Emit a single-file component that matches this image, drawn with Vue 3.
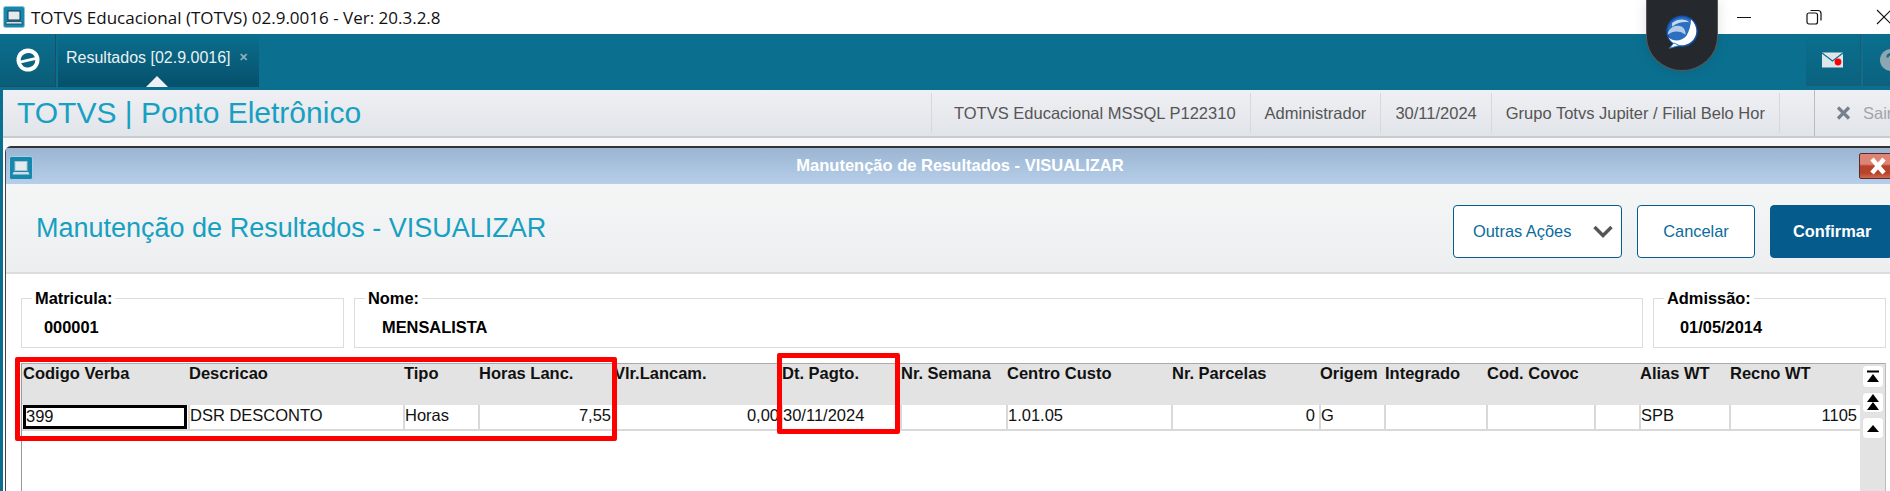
<script setup>
const info = [
  'TOTVS Educacional MSSQL P122310',
  'Administrador',
  '30/11/2024',
  'Grupo Totvs Jupiter / Filial Belo Hor'
]
const fields = [
  { key: 'mat', label: 'Matricula:', value: '000001' },
  { key: 'nome', label: 'Nome:', value: 'MENSALISTA' },
  { key: 'adm', label: 'Admissão:', value: '01/05/2014' }
]
const cols = [
  { h: 'Codigo Verba', v: '399', cls: 'focus' },
  { h: 'Descricao', v: 'DSR DESCONTO' },
  { h: 'Tipo', v: 'Horas' },
  { h: 'Horas Lanc.', v: '7,55', cls: 'num' },
  { h: 'Vlr.Lancam.', v: '0,00', cls: 'num' },
  { h: 'Dt. Pagto.', v: '30/11/2024' },
  { h: 'Nr. Semana', v: '' },
  { h: 'Centro Custo', v: '1.01.05' },
  { h: 'Nr. Parcelas', v: '0', cls: 'num wide' },
  { h: 'Origem', v: 'G' },
  { h: 'Integrado', v: '' },
  { h: 'Cod. Covoc', v: '' },
  { h: '', v: '' },
  { h: 'Alias WT', v: 'SPB' },
  { h: 'Recno WT', v: '1105', cls: 'num' }
]
</script>

<template>
  <div class="app">
    <header class="titlebar">
      <svg class="appicon" width="22" height="22" viewBox="0 0 22 22">
        <rect x="0.5" y="0.5" width="21" height="21" rx="2" fill="#1788ad" stroke="#8fc3d6" />
        <rect x="5" y="5" width="12" height="9" fill="#e4ebef" stroke="#16394c" />
        <path d="M3.5 15.5h15l1 2.5h-17z" fill="#cfdde4" stroke="#16394c" stroke-width="0.7" />
      </svg>
      <span class="apptitle">TOTVS Educacional (TOTVS) 02.9.0016 - Ver: 20.3.2.8</span>
      <div class="winctrls">
        <svg width="16" height="16" viewBox="0 0 16 16"><path d="M1 8.5h14" stroke="#111" stroke-width="1" /></svg>
        <svg width="16" height="16" viewBox="0 0 16 16" fill="none" stroke="#111" stroke-width="1.2">
          <rect x="1" y="4" width="10.5" height="11" rx="2" />
          <path d="M4.5 1.5h7.5a3 3 0 0 1 3 3v7" />
        </svg>
        <svg width="16" height="16" viewBox="0 0 16 16"><path d="M1 1l14 14M15 1L1 15" stroke="#111" stroke-width="1.1" /></svg>
      </div>
    </header>

    <nav class="topbar">
      <div class="hometile">
        <svg width="24" height="24" viewBox="0 0 24 24">
          <circle cx="12" cy="12" r="11.500" fill="#fff" />
          <path d="M4.700 12.400A7.500 7.500 0 0 1 18.900 9.200Z" fill="#0a6583" />
          <path d="M5.100 15.200L19.300 12A7.500 7.500 0 0 1 5.100 15.200Z" fill="#0a6583" />
        </svg>
      </div>
      <div class="tab">
        <span class="tabtext">Resultados [02.9.0016]</span>
        <span class="tabx">✕</span>
        <i class="tabarrow"></i>
      </div>
      <div class="spacer"></div>
      <div class="sidetile mail">
        <svg width="22" height="16" viewBox="0 0 22 16">
          <rect width="21" height="15" y="0.5" fill="#dfe6e9" />
          <path d="M0 1l10.5 8L21 1" fill="none" stroke="#0b6f8e" stroke-width="1.2" />
          <circle cx="16" cy="10" r="3.4" fill="#f00" />
        </svg>
      </div>
      <div class="sidetile help">
        <svg width="26" height="26" viewBox="0 0 26 26">
          <circle cx="13" cy="13" r="11" fill="#8da7b2" />
          <path d="M9.500 10.500a3.500 3.500 0 1 1 5 3.200c-1 .5-1.500 1-1.500 2.300" fill="none" stroke="#0b6f8e" stroke-width="2.400" />
        </svg>
      </div>
    </nav>

    <div class="main">
      <div class="rail"></div>
      <div class="content">
        <div class="apphead">
          <h1 class="brand">TOTVS | Ponto Eletrônico</h1>
          <div class="infos">
            <span v-for="t in info" :key="t" class="info">{{ t }}</span>
          </div>
          <div class="sair">
            <svg width="15" height="14" viewBox="0 0 15 14"><path d="M2 1.500l11 11M13 1.500l-11 11" stroke="#77808c" stroke-width="3.200" /></svg>
            <span>Sair</span>
          </div>
        </div>

        <section class="window">
          <div class="wintitle">
            <svg class="winicon" width="24" height="24" viewBox="0 0 24 24">
              <rect x="0.5" y="0.5" width="23" height="23" rx="2" fill="#1788ad" stroke="#a8d0e2" />
              <rect x="6" y="5.500" width="12" height="9" fill="#e4ebef" stroke="#a9c3cf" />
              <path d="M4.500 16h15l1 2.500h-17z" fill="#cfdde4" />
            </svg>
            <span>Manutenção de Resultados - VISUALIZAR</span>
            <div class="winclose">
              <svg width="30" height="20" viewBox="0 0 30 20"><path d="M4 3l12 14M16 3L4 17" stroke="#fff" stroke-width="4.400" /></svg>
            </div>
          </div>

          <div class="winhead">
            <h2 class="wintext">Manutenção de Resultados - VISUALIZAR</h2>
            <div class="actions">
              <button class="btn outras">
                <span>Outras Ações</span>
                <svg width="20" height="13" viewBox="0 0 20 13"><path d="M1.500 2l8.500 8.500L18.500 2" fill="none" stroke="#555" stroke-width="3.400" /></svg>
              </button>
              <button class="btn cancelar">Cancelar</button>
              <button class="btn confirmar">Confirmar</button>
            </div>
          </div>

          <div class="fields">
            <fieldset v-for="f in fields" :key="f.key" class="field" :class="f.key">
              <legend>{{ f.label }}</legend>
              <div class="value">{{ f.value }}</div>
            </fieldset>
          </div>

          <div class="gridwrap">
            <div class="grid">
              <div class="ghead">
                <div v-for="c in cols" :key="c.h" class="hcell">{{ c.h }}</div>
              </div>
              <div class="grow">
                <div v-for="c in cols" :key="c.h" class="cell" :class="c.cls">{{ c.v }}</div>
              </div>
            </div>
            <aside class="scroll">
              <button class="sbtn">
                <svg width="14" height="13" viewBox="0 0 14 13"><path d="M1 1.500h12" stroke="#000" stroke-width="2" /><path d="M7 4l6 8H1z" /></svg>
              </button>
              <button class="sbtn">
                <svg width="14" height="17" viewBox="0 0 14 17"><path d="M7 0l6 8H1zM7 8l6 8H1z" /></svg>
              </button>
              <button class="sbtn">
                <svg width="14" height="9" viewBox="0 0 14 9"><path d="M7 1l6 7H1z" /></svg>
              </button>
            </aside>
          </div>
        </section>
      </div>
    </div>

    <div class="shield">
      <svg width="36" height="36" viewBox="0 0 40 40">
        <circle cx="20" cy="18" r="17.500" fill="#1350aa" />
        <circle cx="20" cy="18" r="15.500" fill="#2a6fc0" />
        <path d="M30 5C38 12 38 24 30 30 22 36 10 35 5 25 11 30 20 29 25 23 28 18 30 11 30 5Z" fill="#fff" />
        <path d="M4 22C5 14 13 10 20 13 23 15 24 18 24 22 18 17 10 17 4 22Z" fill="#b3cbe8" />
        <path d="M9 9C15 4 24 4 28 8 22 7 15 8 9 13Z" fill="#c5d9ef" />
        <path d="M11 31l-5 6 11-3z" fill="#fff" stroke="#1f7fd0" stroke-width="1" />
      </svg>
    </div>
    <div class="redbox one"></div>
    <div class="redbox two"></div>
  </div>
</template>

<style scoped>
.app {
  position: relative;
  width: 1890px;
  height: 491px;
  overflow: hidden;
  background: #fff;
  font-family: "Liberation Sans", Arial, sans-serif;
  color: #000;
}
.titlebar {
  height: 34px;
  display: flex;
  align-items: center;
  padding-left: 3px;
  box-sizing: border-box;
  background: #fff;
}
.appicon { flex: none; }
.apptitle {
  margin-left: 6px;
  font-family: "Open Sans", "Noto Sans", sans-serif;
  font-size: 17px;
  color: #111;
  white-space: nowrap;
}
.winctrls {
  margin-left: auto;
  display: flex;
  gap: 54px;
  margin-right: -2px;
  align-items: center;
  height: 34px;
}
.topbar {
  height: 56px;
  display: flex;
  background: #0b7090;
}
.hometile {
  width: 56px;
  height: 53px;
  display: flex;
  align-items: center;
  justify-content: center;
  background: linear-gradient(#0a6f8e, #0a5d78);
  border-right: 1px solid #1c4f63;
  border-bottom: 1px solid #1c4f63;
  box-sizing: border-box;
}
.tab {
  position: relative;
  margin-left: 2px;
  width: 201px;
  height: 53px;
  box-sizing: border-box;
  padding: 0 0 6px 8px;
  display: flex;
  align-items: center;
  background: linear-gradient(#0a6f8e, #06506b);
  color: #e9f1f4;
  font-size: 16px;
}
.tabtext { white-space: nowrap; }
.tabx {
  margin-left: 8px;
  font-size: 11px;
  font-weight: bold;
  color: #8fb0bd;
}
.tabarrow {
  position: absolute;
  left: 88px;
  bottom: 0;
  width: 0;
  height: 0;
  border-left: 11px solid transparent;
  border-right: 11px solid transparent;
  border-bottom: 11px solid #eef0f3;
}
.spacer { flex: 1; }
.sidetile {
  height: 52px;
  display: flex;
  align-items: center;
  box-sizing: border-box;
  background: linear-gradient(#0a6f8e, #0a6380);
  border-bottom: 1px solid #24596c;
}
.mail {
  width: 55px;
  margin-right: 2px;
  justify-content: center;
  border-right: 1px solid #24596c;
}
.help {
  width: 27px;
  padding-left: 15px;
  overflow: hidden;
}
.help svg { flex: none; }
.main { display: flex; }
.rail {
  width: 3px;
  height: 401px;
  background: #0b7090;
  flex: none;
}
.content {
  flex: 1;
  min-width: 0;
  background: #fff;
}
.apphead {
  height: 48px;
  box-sizing: border-box;
  display: flex;
  align-items: center;
  background: linear-gradient(#eff0f4, #e1e4e9);
  border-bottom: 2px solid #c8cbcf;
  padding-left: 14px;
  margin-bottom: 8px;
  box-shadow: 0 8px 0 #f8f8f8;
}
.brand {
  margin: 0;
  font-weight: normal;
  font-size: 30px;
  color: #16a0c2;
  white-space: nowrap;
  width: 914px;
  flex: none;
}
.infos {
  display: flex;
  height: 40px;
  align-items: center;
  color: #555;
  font-size: 16.500px;
  border-right: 1px solid #d6d8db;
  border-left: 1px solid #d6d8db;
}
.info {
  white-space: nowrap;
  padding: 0 14px;
  line-height: 40px;
  border-left: 1px solid #d6d8db;
}
.info:first-child {
  border-left: none;
  padding-left: 22px;
}
.sair {
  margin-left: 34px;
  height: 46px;
  border-left: 1px solid #b9bcc0;
  display: flex;
  align-items: center;
  padding-left: 21px;
  gap: 12px;
  color: #a0a5ac;
  font-size: 16.500px;
  flex: none;
}
.window {
  margin-left: 2px;
  border-top: 2px solid #333;
  border-left: 1px solid #444;
  border-top-left-radius: 6px;
  background: #fff;
}
.wintitle {
  position: relative;
  height: 36px;
  box-sizing: border-box;
  display: flex;
  align-items: center;
  justify-content: center;
  padding: 0 0 2px 24px;
  background: linear-gradient(#9bb5d2, #b6cee9);
  color: #fff;
  font-weight: bold;
  font-size: 16.500px;
}
.winicon {
  position: absolute;
  left: 3px;
  top: 8px;
}
.winclose {
  position: absolute;
  left: 1853px;
  top: 5px;
  width: 40px;
  height: 26px;
  box-sizing: border-box;
  border: 1px solid #5c2a2e;
  border-radius: 2px;
  background: linear-gradient(#dd8574 0, #dd8574 42%, #b8432c 50%, #b8432c 80%, #d06a50 100%);
  padding: 2px 0 0 8px;
}
.winclose svg { display: block; }
.winhead {
  height: 90px;
  box-sizing: border-box;
  display: flex;
  align-items: center;
  padding-left: 30px;
  background: linear-gradient(#f4f6f6, #edeef0);
  border-bottom: 2px solid #dcdcdc;
}
.wintext {
  margin: 0;
  font-weight: normal;
  font-size: 27px;
  color: #16a0c2;
  white-space: nowrap;
}
.actions {
  margin-left: auto;
  display: flex;
  gap: 15px;
  height: 53px;
  align-self: flex-start;
  margin-top: 21px;
}
.btn {
  box-sizing: border-box;
  height: 53px;
  border: 1px solid #045b8c;
  border-radius: 4px;
  background: #fff;
  color: #0b6b9c;
  font-family: inherit;
  font-size: 16.400px;
  padding: 0;
}
.outras {
  width: 169px;
  display: flex;
  align-items: center;
  padding-left: 19px;
  gap: 22px;
}
.cancelar { width: 118px; }
.confirmar {
  width: 120px;
  background: #045b8c;
  color: #fff;
  font-weight: bold;
  border-radius: 4px 0 0 4px;
  text-align: left;
  padding-left: 22px;
}
.fields {
  display: flex;
  gap: 10px;
  padding: 15px 0 0 15px;
}
.field {
  box-sizing: border-box;
  margin: 0;
  padding: 0;
  height: 59px;
  border: 1px solid #dcdcdc;
  min-width: 0;
}
.field legend {
  margin-left: 10px;
  padding: 0 3px;
  font-size: 16.400px;
  font-weight: bold;
  line-height: 18px;
}
.field .value {
  font-size: 16.400px;
  font-weight: bold;
  line-height: 20px;
  padding-top: 10px;
}
.mat { width: 323px; }
.mat .value { padding-left: 22px; }
.nome { width: 1289px; }
.nome .value { padding-left: 27px; }
.adm { width: 233px; }
.adm .value { padding-left: 26px; }
.gridwrap {
  display: flex;
  margin: 15px 0 0 15px;
  height: 128px;
}
.grid {
  width: 1839px;
  flex: none;
  box-sizing: border-box;
  border-top: 1px solid #aaa;
  border-left: 1px solid #999;
}
.ghead, .grow {
  display: grid;
  grid-template-columns: 166px 215px 75px 135px 168px 119px 106px 165px 148px 65px 102px 108px 45px 90px 130px;
}
.ghead {
  height: 41px;
  background: #e3e3e3;
}
.hcell {
  font-size: 16.500px;
  font-weight: bold;
  line-height: 19px;
  padding: 0 0 0 1px;
  white-space: nowrap;
  color: #111;
}
.grow {
  height: 26px;
  box-sizing: border-box;
  border-bottom: 2px solid #d9d9d9;
}
.cell {
  box-sizing: border-box;
  font-size: 16.500px;
  line-height: 21px;
  padding: 0;
  border-left: 2px solid #d9d9d9;
  white-space: nowrap;
  overflow: hidden;
  color: #111;
}
.cell.num {
  text-align: right;
  padding-right: 2px;
}
.cell.num.wide { padding-right: 4px; }
.cell.focus {
  border: 3px solid #000;
  line-height: 16px;
  height: 24px;
  padding-left: 0;
  margin-left: 1px;
  margin-right: 1px;
}
.scroll {
  width: 26px;
  flex: none;
  box-sizing: border-box;
  background: #e3e3e3;
  border-right: 1px solid #bbb;
  border-top: 1px solid #aaa;
  display: flex;
  flex-direction: column;
  gap: 4px;
  padding: 1px 0 0 2px;
}
.sbtn {
  width: 22px;
  height: 23px;
  padding: 0;
  border: 1px solid #e0e0e0;
  border-radius: 4px;
  background: #fff;
  display: flex;
  align-items: center;
  justify-content: center;
}
.sbtn:nth-child(2) { height: 21px; }
.sbtn:nth-child(3) { height: 22px; }
.shield {
  position: absolute;
  left: 1646px;
  top: 0;
  width: 72px;
  height: 71px;
  box-sizing: border-box;
  background: #25292d;
  border: 1px solid #55585b;
  border-top: none;
  border-radius: 0 0 36px 36px / 0 0 34px 34px;
  display: flex;
  align-items: center;
  justify-content: center;
  box-shadow: 0 0 14px rgba(0, 0, 0, 0.12);
  padding-bottom: 4px;
}
.redbox {
  position: absolute;
  box-sizing: border-box;
  border: 5px solid #f00;
  border-radius: 2px;
}
.redbox.one {
  left: 15px;
  top: 357px;
  width: 602px;
  height: 84px;
}
.redbox.two {
  left: 777px;
  top: 353px;
  width: 123px;
  height: 81px;
}
</style>

<style>
html, body { margin: 0; overflow: hidden; }
</style>
